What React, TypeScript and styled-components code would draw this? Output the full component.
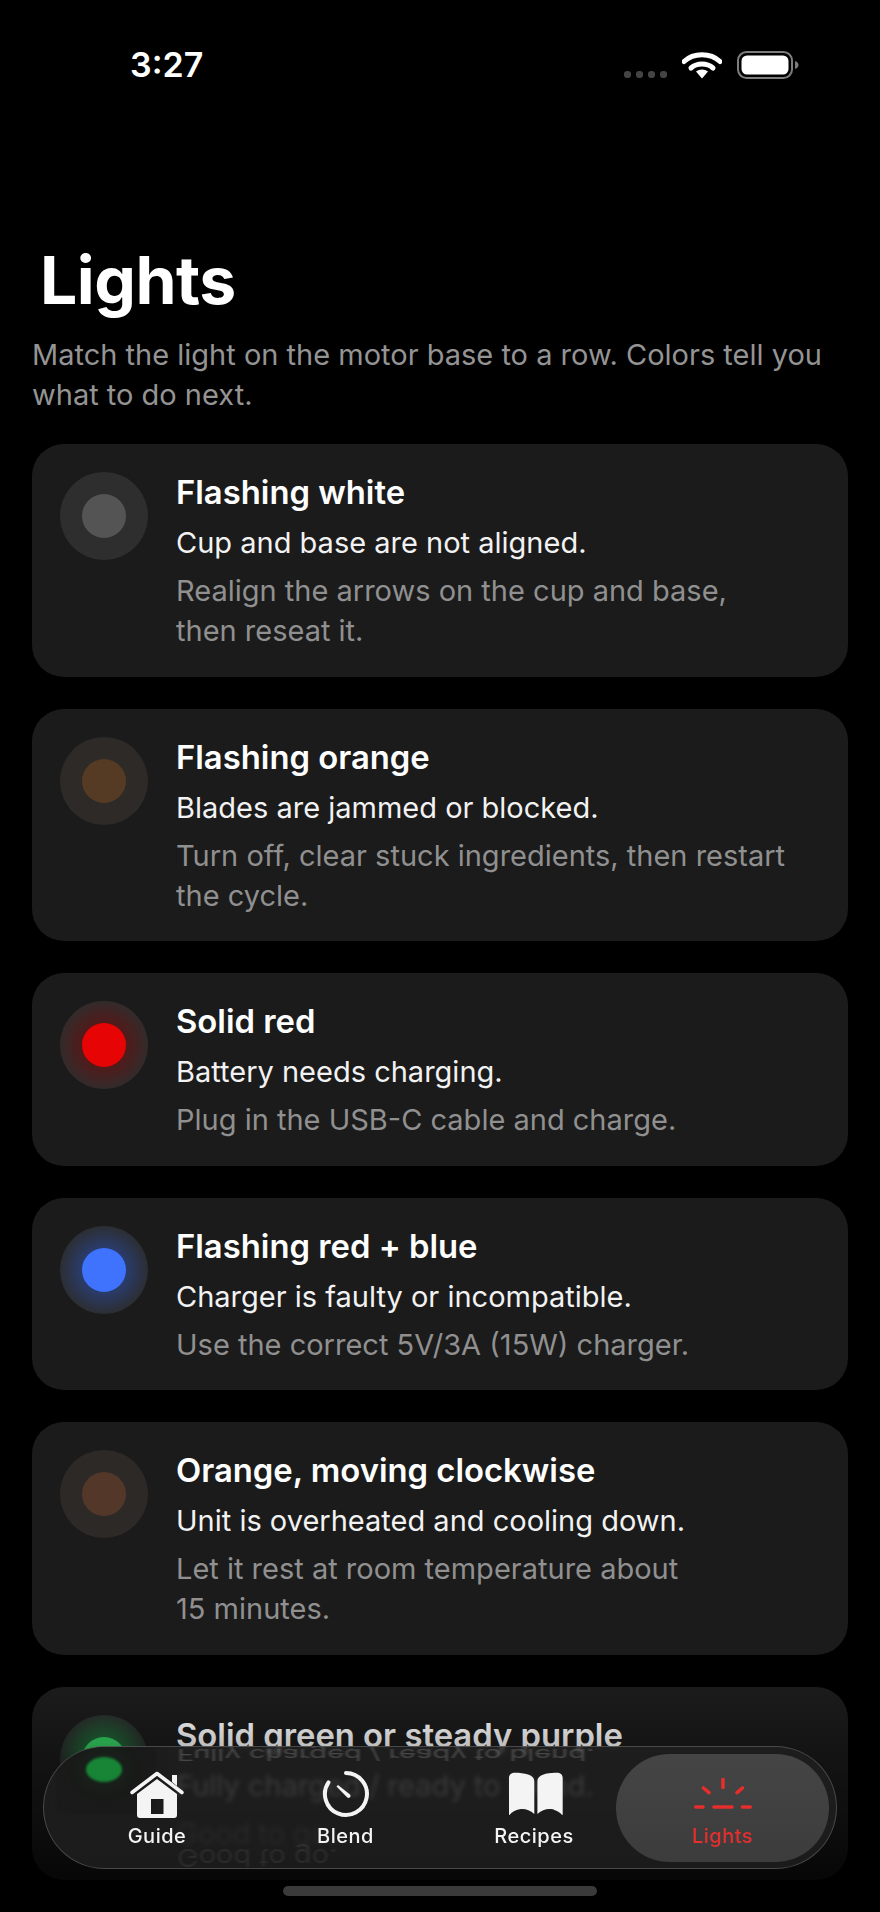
import React from "react";
import styled, { createGlobalStyle } from "styled-components";

const Global = createGlobalStyle`
  html, body { margin: 0; padding: 0; background: #000; }
  body { font-family: Inter, "Liberation Sans", sans-serif; -webkit-font-smoothing: antialiased; }
`;

const Screen = styled.div`
  position: relative;
  width: 880px;
  height: 1912px;
  overflow: hidden;
  background: #000;
  color: #fff;
`;

const StatusBar = styled.div`
  display: flex;
  align-items: flex-start;
  justify-content: space-between;
  height: 238px;
  padding: 48px 81px 0 130px;
  box-sizing: border-box;
`;

const Clock = styled.div`
  font-size: 34px;
  line-height: 34px;
  font-weight: 600;
`;

const StatusIcons = styled.div`
  display: flex;
  align-items: flex-start;
  padding-top: 3px;
`;

const SignalDots = styled.div`
  display: flex;
  gap: 5px;
  margin: 20px 15px 0 0;
`;

const SignalDot = styled.span`
  width: 7px;
  height: 7px;
  border-radius: 3px;
  background: #444;
`;

const Header = styled.header`
  padding: 0 32px;
`;

const Title = styled.h1`
  margin: 0 0 0 8px;
  font-size: 66px;
  line-height: 84px;
  font-weight: 700;
  letter-spacing: -0.5px;
`;

const Lead = styled.p`
  margin: 13px 0 0;
  width: 810px;
  font-size: 29px;
  line-height: 40px;
  color: #949494;
`;

const List = styled.div`
  display: flex;
  flex-direction: column;
  gap: 32px;
  margin-top: 29px;
  padding: 0 32px;
`;

const Card = styled.article`
  display: flex;
  gap: 28px;
  padding: 28px 28px 25.6px;
  border-radius: 32px;
  background: #1b1b1b;
  box-sizing: border-box;
`;

const Halo = styled.div<{ $halo: string }>`
  flex: none;
  display: flex;
  align-items: center;
  justify-content: center;
  width: 88px;
  height: 88px;
  border-radius: 50%;
  background: ${(p) => p.$halo};
`;

const Dot = styled.div<{ $color: string }>`
  width: 44px;
  height: 44px;
  border-radius: 50%;
  background: ${(p) => p.$color};
`;

const CardBody = styled.div`
  display: flex;
  flex-direction: column;
  min-width: 0;
`;

const CardTitle = styled.h2`
  margin: 0;
  font-size: 32.8px;
  line-height: 40px;
  font-weight: 600;
`;

const CardCause = styled.div`
  margin-top: 11px;
  font-size: 29px;
  line-height: 40px;
  color: #f2f2f2;
`;

const CardFix = styled.div`
  margin-top: 8px;
  width: 640px;
  font-size: 29px;
  line-height: 40px;
  color: #909090;
`;

const BottomFade = styled.div`
  position: absolute;
  left: 0;
  right: 0;
  top: 1690px;
  height: 222px;
  background: linear-gradient(to bottom, rgba(0,0,0,0) 0%, rgba(0,0,0,0.3) 30%, rgba(0,0,0,0.5) 60%, rgba(0,0,0,0.8) 90%, #000 100%);
  pointer-events: none;
`;

const TabBar = styled.nav`
  position: absolute;
  left: 43px;
  top: 1746px;
  width: 794px;
  height: 123px;
  display: flex;
  align-items: center;
  padding-left: 31px;
  box-sizing: border-box;
  border-radius: 62px;
  overflow: hidden;
  border: 1.5px solid rgba(140, 140, 140, 0.4);
  background: rgba(32, 32, 32, 0.8);
  backdrop-filter: blur(2px);
`;

/* Light bent by the glass edge: mirrored copies of what passes underneath. */
const MirrorLine = styled.div<{ $top: number; $squash: number; $alpha: number }>`
  position: absolute;
  top: ${(p) => p.$top}px;
  left: 133px;
  font-size: 29px;
  line-height: 40px;
  color: rgba(255, 255, 255, ${(p) => p.$alpha});
  white-space: nowrap;
  transform: scaleY(${(p) => -p.$squash});
  filter: blur(0.9px);
`;

/* Masks the dot passing under the bar, so only its refracted image shows. */
const GlassPatch = styled.div`
  position: absolute;
  left: 12px;
  top: -6px;
  width: 100px;
  height: 72px;
  background: #191a19;
  filter: blur(5px);
`;

const RefractedDot = styled.div`
  position: absolute;
  left: 41.5px;
  top: 9.5px;
  width: 36px;
  height: 25px;
  border-radius: 50%;
  background: #178436;
  box-shadow: 0 0 22px rgba(30, 140, 60, 0.2);
  filter: blur(0.8px);
`;

const TabGroup = styled.div`
  position: relative;
  display: flex;
  gap: 24.5px;
`;

const Tab = styled.div<{ $active?: boolean }>`
  position: relative;
  flex: none;
  width: ${(p) => (p.$active ? "213px" : "164px")};
  height: 108px;
  display: flex;
  flex-direction: column;
  align-items: center;
  justify-content: flex-end;
  padding-bottom: 14px;
  box-sizing: border-box;
  border-radius: 54px;
  background: ${(p) => (p.$active ? "linear-gradient(#454545, #3c3c3c)" : "transparent")};
  color: ${(p) => (p.$active ? "#e62e2d" : "#f4f4f4")};
`;

const TabIcon = styled.svg`
  position: absolute;
  left: 50%;
  top: 16px;
  transform: translateX(-50%);
`;

const TabLabel = styled.span`
  font-size: 20px;
  line-height: 24px;
  font-weight: 500;
  letter-spacing: 0.5px;
`;

const HomeIndicator = styled.div`
  position: absolute;
  left: 283px;
  top: 1886px;
  width: 314px;
  height: 10px;
  border-radius: 5px;
  background: #3a3a3a;
`;

type Row = { title: string; cause: string; fix: string; halo: string; dot: string };

const rows: Row[] = [
  {
    title: "Flashing white",
    cause: "Cup and base are not aligned.",
    fix: "Realign the arrows on the cup and base, then\u00A0reseat it.",
    halo: "#2e2e2e",
    dot: "#545454",
  },
  {
    title: "Flashing orange",
    cause: "Blades are jammed or blocked.",
    fix: "Turn off, clear stuck ingredients, then restart the\u00A0cycle.",
    halo: "#2d2a27",
    dot: "#553b24",
  },
  {
    title: "Solid red",
    cause: "Battery needs charging.",
    fix: "Plug in the USB-C cable and charge.",
    halo: "radial-gradient(circle closest-side, #521a1a 50%, #332b2b 100%)",
    dot: "#e60404",
  },
  {
    title: "Flashing red + blue",
    cause: "Charger is faulty or incompatible.",
    fix: "Use the correct 5V/3A (15W) charger.",
    halo: "radial-gradient(circle closest-side, #2a3c6c 50%, #2c2e33 100%)",
    dot: "#3f72fd",
  },
  {
    title: "Orange, moving clockwise",
    cause: "Unit is overheated and cooling down.",
    fix: "Let it rest at room temperature about 15\u00A0minutes.",
    halo: "#2d2927",
    dot: "#53382a",
  },
  {
    title: "Solid green or steady purple",
    cause: "Fully charged / ready to blend.",
    fix: "Good to go.",
    halo: "radial-gradient(circle closest-side, #1f6035 50%, #2a302c 100%)",
    dot: "#35d162",
  },
];

const App = () => (
  <Screen>
    <Global />
    <StatusBar>
      <Clock>3:27</Clock>
      <StatusIcons>
        <SignalDots>
          <SignalDot />
          <SignalDot />
          <SignalDot />
          <SignalDot />
        </SignalDots>
        <svg width="40" height="28" viewBox="0 0 40 28">
          <path d="M2 10.500C11.500 1.500 28.500 1.500 38 10.500" fill="none" stroke="#fff" strokeWidth="5" strokeLinecap="round" />
          <path d="M9 17C15 11.800 25 11.800 31 17" fill="none" stroke="#fff" strokeWidth="5" strokeLinecap="round" />
          <path d="M14 20.500C17.500 17.700 22.500 17.700 26 20.500L20 27.500Z" fill="#fff" />
        </svg>
        <svg width="63" height="28" viewBox="0 0 63 28" style={{ marginLeft: 14 }}>
          <rect x="2" y="1" width="54" height="26" rx="8.500" fill="none" stroke="#7d7d7d" strokeWidth="2" />
          <rect x="5.500" y="4.500" width="47" height="19" rx="5.500" fill="#fff" />
          <path d="M59 10C61.500 10.800 62.500 12.300 62.500 14C62.500 15.700 61.500 17.200 59 18Z" fill="#7d7d7d" />
        </svg>
      </StatusIcons>
    </StatusBar>

    <Header>
      <Title>Lights</Title>
      <Lead>Match the light on the motor base to a row. Colors tell you what to do next.</Lead>
    </Header>

    <List>
      {rows.map((r) => (
        <Card key={r.title}>
          <Halo $halo={r.halo}>
            <Dot $color={r.dot} />
          </Halo>
          <CardBody>
            <CardTitle>{r.title}</CardTitle>
            <CardCause>{r.cause}</CardCause>
            <CardFix>{r.fix}</CardFix>
          </CardBody>
        </Card>
      ))}
    </List>

    <BottomFade />

    <TabBar>
      <GlassPatch />
      <RefractedDot />
      <MirrorLine $top={-13} $squash={0.55} $alpha={0.18}>
        Fully charged / ready to blend.
      </MirrorLine>
      <MirrorLine $top={90} $squash={0.85} $alpha={0.07}>
        Good to go.
      </MirrorLine>
      <TabGroup>
        <Tab>
          <TabIcon width="56" height="50" viewBox="0 0 56 50" fill="none">
            <path d="M3 22.500L28 3.500L53 22.500" stroke="currentColor" strokeWidth="3.600" strokeLinecap="round" strokeLinejoin="round" />
            <path d="M43 5H48V16L43 12Z" fill="currentColor" />
            <path fillRule="evenodd" d="M8 24L28 9L48 24V45C48 47 47 48 45 48H11C9 48 8 47 8 45ZM22 29V44H34.500V29Z" fill="currentColor" />
          </TabIcon>
          <TabLabel>Guide</TabLabel>
        </Tab>
        <Tab>
          <TabIcon width="50" height="50" viewBox="0 0 50 50" fill="none">
            <path d="M25 3A21 21 0 1 1 7.500 12.300" stroke="currentColor" strokeWidth="4" strokeLinecap="round" />
            <path d="M15.500 16.500L17 15L29 24.500C30.500 26.500 28.500 28.800 26.300 27.500Z" fill="currentColor" />
          </TabIcon>
          <TabLabel>Blend</TabLabel>
        </Tab>
        <Tab>
          <TabIcon width="60" height="50" viewBox="0 0 60 50" fill="currentColor">
            <path d="M5 8C5 4.500 7.500 2.700 11 2.700C20 2.700 30.300 4.500 30.300 11V44C26 40 21 38.500 17 39C12 39.500 8 42 5.500 45C5 45 5 44.500 5 44Z" />
            <path d="M58.700 8C58.700 4.500 56.200 2.700 52.700 2.700C43.700 2.700 33.400 4.500 33.400 11V44C37.700 40 42.700 38.500 46.700 39C51.700 39.500 55.700 42 58.200 45C58.700 45 58.700 44.500 58.700 44Z" />
          </TabIcon>
          <TabLabel>Recipes</TabLabel>
        </Tab>
      </TabGroup>
      <Tab $active>
        <TabIcon width="64" height="50" viewBox="0 0 64 50" fill="none" stroke="currentColor" strokeWidth="3.600" strokeLinecap="round">
          <path d="M32 9.500V17.500" />
          <path d="M12.500 18L18 22.700" />
          <path d="M51.500 18L46 22.700" />
          <path d="M4.800 37H12" />
          <path d="M23 37H41" />
          <path d="M51.500 37H59.200" />
        </TabIcon>
        <TabLabel>Lights</TabLabel>
      </Tab>
    </TabBar>

    <HomeIndicator />
  </Screen>
);

export default App;
